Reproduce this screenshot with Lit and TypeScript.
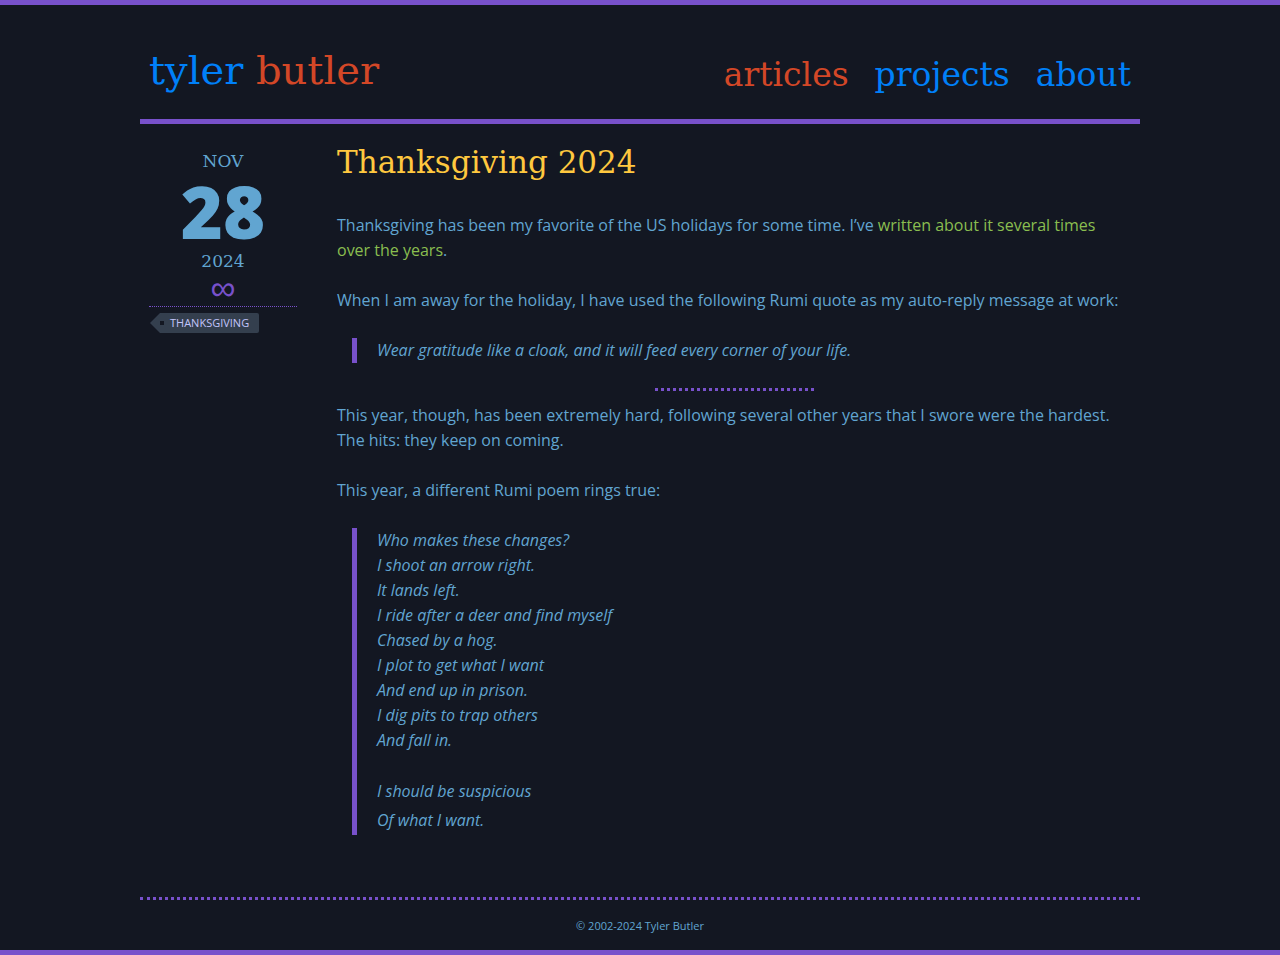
import { LitElement, html, css } from "lit";
import { customElement } from "lit/decorators.js";

const POEM = [
  "Who makes these changes?",
  "I shoot an arrow right.",
  "It lands left.",
  "I ride after a deer and find myself",
  "Chased by a hog.",
  "I plot to get what I want",
  "And end up in prison.",
  "I dig pits to trap others",
  "And fall in.",
];

@customElement("app-root")
export class AppRoot extends LitElement {
  static styles = css`
    :host {
      display: flex;
      flex-direction: column;
      box-sizing: border-box;
      min-height: 100vh;
      border-top: 5px solid #7851cb;
      border-bottom: 5px solid #7851cb;
      background: #131722;
      color: #61a5d1;
      font: 16px/25px "Open Sans", sans-serif;
    }
    * { box-sizing: border-box; }
    a { color: inherit; text-decoration: none; }
    a:hover { text-decoration: underline; }
    p, h1, blockquote { margin: 0; }
    .page { width: 100%; max-width: 1000px; margin: 0 auto; display: flex; flex-direction: column; flex: 1; }
    .serif { font-family: "DejaVu Serif", serif; font-weight: 400; }
    .header {
      display: flex;
      flex-wrap: wrap;
      justify-content: space-between;
      align-items: flex-end;
      padding: 40px 9px 24px;
      border-bottom: 5px solid #7851cb;
    }
    .brand { font-size: 40px; line-height: 50px; color: #0080f9; }
    .red { color: #d34727; }
    .nav { display: flex; flex-wrap: wrap; gap: 26px; font-size: 33px; line-height: 40px; color: #0080f9; }
    .main { display: grid; grid-template-columns: 148px minmax(0, 1fr); gap: 40px; padding: 13px 9px 0; }
    .date { display: flex; flex-direction: column; align-items: center; font-size: 17px; line-height: 25px; padding: 12px 0 7px; border-bottom: 1px dotted #7851cb; }
    .day { font: 800 72px/75px "Open Sans", sans-serif; }
    .permalink { color: #7851cb; font-family: "Noto Sans", sans-serif; font-size: 35px; line-height: 25px; }
    .tags { display: flex; padding-top: 6px; }
    .tag {
      position: relative;
      display: block;
      margin-left: 11px;
      padding: 0 10px;
      background: #343f4e;
      border-radius: 0 2px 2px 0;
      color: #c3c5fb;
      font-size: 11px;
      line-height: 20px;
      text-transform: uppercase;
    }
    .tag::before {
      content: "";
      position: absolute;
      left: -10px;
      top: 0;
      border: solid transparent;
      border-width: 10px 10px 10px 0;
      border-right-color: #343f4e;
    }
    .tag::after { content: ""; position: absolute; left: 0; top: 8px; width: 4px; height: 4px; background: #131722; }
    .post { display: flex; flex-direction: column; gap: 25px; }
    .title { font-size: 31px; line-height: 51px; color: #ffc83f; }
    .link { color: #8abe50; }
    .quote { margin-left: 15px; padding-left: 20px; border-left: 5px solid #7851cb; font-style: italic; }
    .stanza { margin-bottom: 24px; }
    .last { line-height: 29px; }
    .rule { width: 159px; margin: 0 auto -13px; border: 0; border-top: 3px dotted #7851cb; }
    .footer { margin-top: auto; padding: 13px 0 12px; border-top: 3px dotted #7851cb; text-align: center; font-size: 11px; line-height: 25px; }
  `;

  render() {
    return html`
      <div class="page">
        <header class="header">
          <a class="brand serif" href="#home">tyler <span class="red">butler</span></a>
          <nav class="nav serif">
            <a class="red" href="#articles">articles</a>
            <a href="#projects">projects</a>
            <a href="#about">about</a>
          </nav>
        </header>
        <main class="main">
          <aside>
            <div class="date">
              <span class="serif">NOV</span>
              <span class="day">28</span>
              <span class="serif">2024</span>
              <a class="permalink" href="#permalink">∞</a>
            </div>
            <div class="tags"><a class="tag" href="#thanksgiving">Thanksgiving</a></div>
          </aside>
          <article class="post">
            <h1 class="title serif">Thanksgiving 2024</h1>
            <p>Thanksgiving has been my favorite of the US holidays for some time. I’ve <a class="link" href="#years">written about it several times over the years</a>.</p>
            <p>When I am away for the holiday, I have used the following Rumi quote as my auto-reply message at work:</p>
            <blockquote class="quote">Wear gratitude like a cloak, and it will feed every corner of your life.</blockquote>
            <hr class="rule" />
            <p>This year, though, has been extremely hard, following several other years that I swore were the hardest. The hits: they keep on coming.</p>
            <p>This year, a different Rumi poem rings true:</p>
            <blockquote class="quote">
              <p class="stanza">${POEM.map((line) => html`${line}<br />`)}</p>
              <p class="last">I should be suspicious<br />Of what I want.</p>
            </blockquote>
          </article>
        </main>
        <footer class="footer">© 2002-2024 Tyler Butler</footer>
      </div>
    `;
  }
}
